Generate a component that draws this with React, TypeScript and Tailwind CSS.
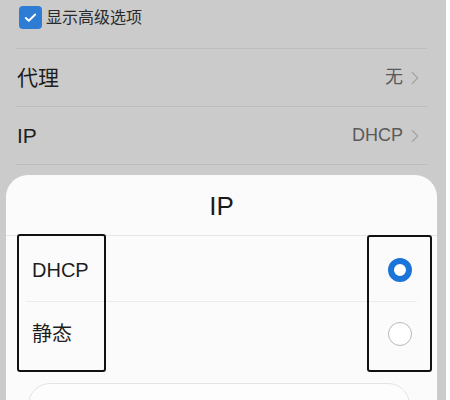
import { ChevronRight } from 'lucide-react';

const font = { fontFamily: '"Liberation Sans", "Noto Sans CJK SC", sans-serif' };

const rows = [
  { label: '代理', value: '无' },
  { label: 'IP', value: 'DHCP' },
];

const options = [
  { label: 'DHCP', checked: true },
  { label: '静态', checked: false },
];

export default function App() {
  return (
    <div className="flex h-[400px] w-[450px] overflow-hidden bg-white" style={font}>
      <div className="relative w-[446px] bg-[#cbcbcb]">
        {/* dimmed settings list */}
        <div className="flex h-[48px] items-start gap-[4px] pl-[19px] pt-[6px]">
          <div className="flex h-[23px] w-[23px] items-center justify-center rounded-[4px] bg-[#2f7cd5]">
            <svg width="15" height="15" viewBox="0 0 16 16" fill="none">
              <path d="M3 8.5l3.2 3L13 4.8" stroke="white" strokeWidth="2" strokeLinecap="round" strokeLinejoin="round" />
            </svg>
          </div>
          <span className="text-[16px] leading-[24px] text-[#2a2a2a]">显示高级选项</span>
        </div>
        <div className="ml-[16px] mr-[19px] border-t border-[#bcbcbc]" />
        {rows.map((r) => (
          <div key={r.label}>
            <div className="flex h-[57px] items-center justify-between pl-[17px] pr-[20px]">
              <span className="text-[21px] text-[#1e1e1e]">{r.label}</span>
              <div className="flex items-center gap-[1px]">
                <span className="text-[18px] text-[#5a5a5a]">{r.value}</span>
                <ChevronRight className="h-[22px] w-[22px] text-[#a3a3a3]" strokeWidth={1.2} />
              </div>
            </div>
            <div className="ml-[16px] mr-[19px] border-t border-[#bcbcbc]" />
          </div>
        ))}

        {/* bottom sheet */}
        <div className="relative ml-[6px] mt-[10px] h-[260px] w-[431px] rounded-t-[22px] bg-[#fbfbfb]">
          <div className="flex h-[60px] items-center justify-center pt-[3px]">
            <span className="text-[26px] text-[#1a1a1a]">IP</span>
          </div>
          <div className="border-t border-[#e6e6e6]" />
          <div className="px-[20px]">
            {options.map((o, i) => (
              <div key={o.label}>
                <div className={`flex items-center justify-between pl-[6px] pr-[5px] ${i === 0 ? 'h-[65px] pt-[2px]' : 'h-[63px]'}`}>
                  <span className="text-[20px] text-[#1e1e1e]">{o.label}</span>
                  {o.checked ? (
                    <div className="h-[24px] w-[24px] rounded-full border-[6px] border-[#1b74d8] bg-white" />
                  ) : (
                    <div className="h-[24px] w-[24px] rounded-full border border-[#b8b8b8] bg-white" />
                  )}
                </div>
                {i === 0 && <div className="border-t border-[#ececec]" />}
              </div>
            ))}
          </div>
          <div className="ml-[22px] mt-[18px] h-[44px] w-[382px] rounded-[22px] border border-[#e4e4e4] bg-[#fdfdfd]" />

          {/* annotation boxes */}
          <div className="absolute left-[11px] top-[59px] h-[138px] w-[89px] rounded-[3px] border-2 border-[#111]" />
          <div className="absolute left-[361px] top-[60px] h-[137px] w-[65px] rounded-[3px] border-2 border-[#111]" />
        </div>
      </div>
    </div>
  );
}
